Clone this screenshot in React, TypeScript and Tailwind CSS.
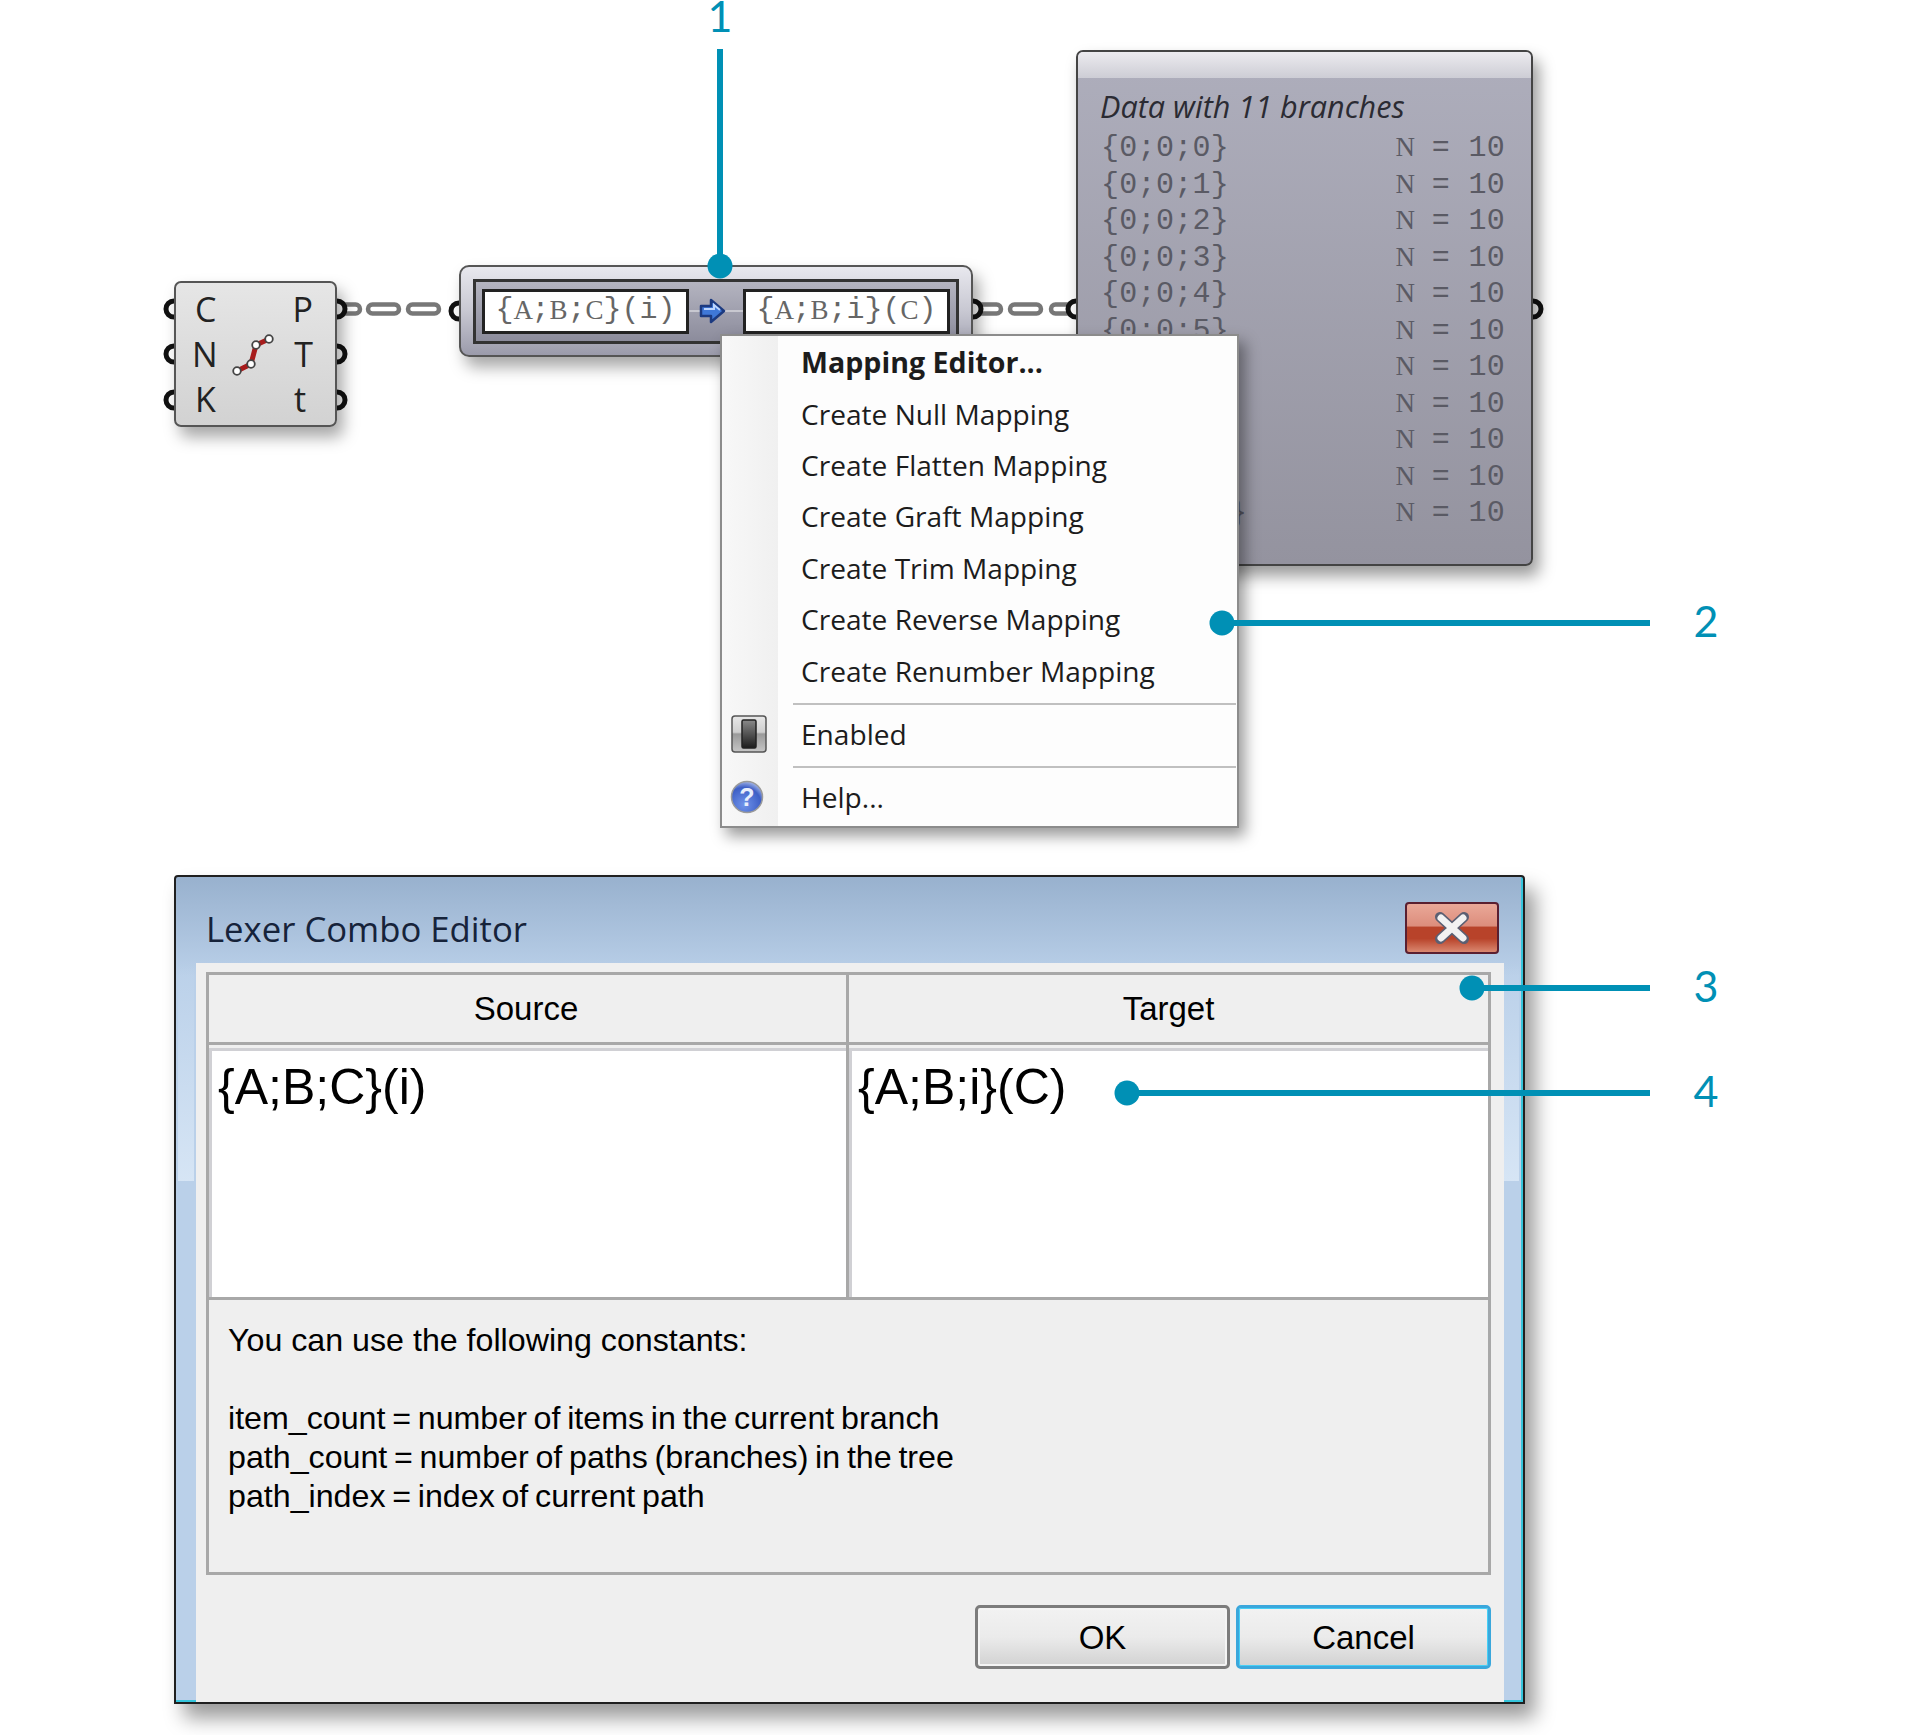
import React from 'react';

const MENU_FONT = { fontFamily: '"Open Sans", sans-serif' };
const MONO_FONT = { fontFamily: '"Liberation Mono", monospace' };
const SLAB_FONT = { fontFamily: '"Liberation Serif", serif' };

const rows = ['{0;0;0}', '{0;0;1}', '{0;0;2}', '{0;0;3}', '{0;0;4}', '{0;0;5}', '{0;0;6}', '{0;0;7}', '{0;0;8}', '{0;0;9}', '{0;0;10}'];
const mappings = ['Create Null Mapping', 'Create Flatten Mapping', 'Create Graft Mapping', 'Create Trim Mapping', 'Create Reverse Mapping', 'Create Renumber Mapping'];

// the original is Courier: capitals get a serif face inside the same cell width
const Slab = ({ text }: { text: string }) => (
  <>
    {text.split(/([A-Z])/).map((part, i) =>
      /^[A-Z]$/.test(part) ? (
        <span key={i} className="inline-block w-[18px] text-center text-[27px]" style={SLAB_FONT}>
          {part}
        </span>
      ) : (
        <span key={i}>{part}</span>
      ),
    )}
  </>
);

const Port = ({ cx, cy }: { cx: number; cy: number }) => (
  <circle cx={cx} cy={cy} r="8" fill="#fff" stroke="#111" strokeWidth="5" />
);

const Pill = ({ x1, x2, y }: { x1: number; x2: number; y: number }) => (
  <rect x={x1} y={y - 4.5} width={x2 - x1} height="9" rx="4.5" fill="#fff" stroke="#777" strokeWidth="4.5" />
);

// wires and grip ports sit under the nodes
const Wires = () => (
  <svg className="absolute left-0 top-0" width="1912" height="600">
    <Pill x1={335} x2={360} y={309} />
    <Pill x1={368} x2={399} y={309} />
    <Pill x1={408} x2={439} y={309} />
    <Pill x1={975} x2={1001} y={309} />
    <Pill x1={1010} x2={1041} y={309} />
    <Pill x1={1051} x2={1085} y={309} />
    <Port cx={174} cy={309} />
    <Port cx={174} cy={354} />
    <Port cx={174} cy={400} />
    <Port cx={337} cy={309} />
    <Port cx={337} cy={354} />
    <Port cx={337} cy={400} />
    <Port cx={459} cy={311} />
    <Port cx={973} cy={309} />
    <Port cx={1076} cy={309} />
    <Port cx={1533} cy={309} />
  </svg>
);

const CurveNode = () => (
  <div
    className="absolute left-[174px] top-[281px] h-[146px] w-[163px] rounded-[7px] border-2 border-[#555] bg-gradient-to-b from-[#e6e6e6] to-[#d2d2d2] text-[34px] leading-none text-[#222] shadow-[6px_10px_16px_rgba(0,0,0,0.35)]"
    style={MENU_FONT}
  >
    <div className="flex h-full flex-col justify-between px-[19px] py-[6px]">
      <div className="flex h-[40px] items-center justify-between"><span>C</span><span className="pr-[3px]">P</span></div>
      <div className="flex h-[40px] items-center justify-between"><span className="-ml-[3px]">N</span><span className="pr-[3px]">T</span></div>
      <div className="flex h-[40px] items-center justify-between"><span>K</span><span className="pr-[10px]">t</span></div>
    </div>
    <svg className="absolute left-[52px] top-[47px]" width="50" height="50" viewBox="0 0 50 50">
      <polyline points="9,41 23,34 28,15 41,9" fill="none" stroke="#a81c1c" strokeWidth="5" />
      <g fill="#fff" stroke="#444" strokeWidth="1.8">
        <circle cx="9" cy="41" r="3.8" />
        <circle cx="23" cy="34" r="3.8" />
        <circle cx="28" cy="15" r="3.8" />
        <circle cx="41" cy="9" r="3.8" />
      </g>
    </svg>
  </div>
);

const LexBox = ({ text }: { text: string }) => (
  <div
    className="flex h-[45px] w-[207px] items-center justify-center border-[3px] border-[#222] bg-white pb-[2px] text-[30px] leading-none text-[#666]"
    style={MONO_FONT}
  >
    <Slab text={text} />
  </div>
);

const LexerNode = () => (
  <div className="absolute left-[459px] top-[265px] flex h-[92px] w-[514px] items-center justify-center rounded-[10px] border-2 border-[#555] bg-gradient-to-b from-[#e8e8ee] via-[#c8c8d2] to-[#9b9bab] shadow-[6px_10px_16px_rgba(0,0,0,0.35)]">
    <div className="flex h-[65px] w-[486px] items-center justify-between border-[3px] border-[#333] bg-gradient-to-b from-[#b4b4c0] to-[#8c8c9c] px-[6px]">
      <LexBox text="{A;B;C}(i)" />
      <div className="relative h-[2px] flex-1 bg-[#c8c8d0]">
        <svg className="absolute left-[9px] -top-[14px]" width="30" height="30" viewBox="0 0 30 30">
          <path d="M3 10 H13 V4 L26 15 L13 26 V20 H3 Z" fill="#3f78d8" stroke="#1c3a80" strokeWidth="2.5" strokeLinejoin="round" />
          <path d="M6 13 H16 V9 L22 14" fill="none" stroke="#bcd6ff" strokeWidth="2" />
        </svg>
      </div>
      <LexBox text="{A;B;i}(C)" />
    </div>
  </div>
);

const PanelNode = () => (
  <div className="absolute left-[1076px] top-[50px] h-[516px] w-[457px] overflow-hidden rounded-[7px] border-2 border-[#444] bg-gradient-to-b from-[#aeaebc] to-[#94939f] shadow-[6px_10px_16px_rgba(0,0,0,0.4)]">
    <div className="h-[26px] bg-gradient-to-b from-[#ecebef] to-[#cdcdd5]" />
    <div className="pl-[22px] pr-[26px]">
      <div className="mt-[8px] text-[30.6px] italic leading-[40px] text-[#2b2b33]" style={MENU_FONT}>
        Data with 11 branches
      </div>
      <div className="mt-[4px] pl-[1px] text-[30px] leading-none tracking-[0.3px] text-[#5a5a64]" style={MONO_FONT}>
        {rows.map((r) => (
          <div key={r} className="flex h-[36.5px] items-center justify-between">
            <span>{r}</span>
            <span><Slab text="N = 10" /></span>
          </div>
        ))}
      </div>
    </div>
  </div>
);

const MenuRow = ({ label, bold, h, icon }: { label: string; bold?: boolean; h: string; icon?: React.ReactNode }) => (
  <div className={`flex items-center ${h}`}>
    <div className="flex h-full w-[56px] shrink-0 items-center justify-center">{icon}</div>
    <div className={`pl-[23px] leading-none text-[#1c1c1c] ${bold ? 'text-[28.6px] font-bold' : 'text-[28.1px]'}`}>{label}</div>
  </div>
);

const SwitchIcon = () => (
  <svg width="36" height="38" viewBox="0 0 36 38" className="-ml-[2px]">
    <defs>
      <linearGradient id="swOuter" x1="0" y1="0" x2="0" y2="1">
        <stop offset="0" stopColor="#e8e8e8" />
        <stop offset="0.45" stopColor="#cfcfcf" />
        <stop offset="0.5" stopColor="#9a9a9a" />
        <stop offset="1" stopColor="#c6c6c6" />
      </linearGradient>
      <linearGradient id="swInner" x1="0" y1="0" x2="0" y2="1">
        <stop offset="0" stopColor="#8a8a8a" />
        <stop offset="1" stopColor="#1c1c1c" />
      </linearGradient>
    </defs>
    <rect x="1" y="1" width="34" height="36" rx="3" fill="url(#swOuter)" stroke="#555" strokeWidth="1.5" />
    <rect x="11" y="5" width="14" height="28" rx="1.5" fill="url(#swInner)" stroke="#222" strokeWidth="1.5" />
  </svg>
);

const HelpIcon = () => (
  <svg width="34" height="34" viewBox="0 0 34 34" className="-ml-[7px]">
    <defs>
      <radialGradient id="helpBall" cx="0.4" cy="0.75" r="0.8">
        <stop offset="0" stopColor="#6f93ea" />
        <stop offset="0.7" stopColor="#3e5fc6" />
        <stop offset="1" stopColor="#b7c6ee" />
      </radialGradient>
    </defs>
    <circle cx="17" cy="17" r="15.5" fill="url(#helpBall)" stroke="#9a9a9a" strokeWidth="1.5" />
    <text x="17" y="26" textAnchor="middle" fontSize="25" fontWeight="700" fill="#e8eefc" fontFamily="Liberation Sans, sans-serif">?</text>
  </svg>
);

const ContextMenu = () => (
  <div
    className="absolute left-[720px] top-[334px] h-[494px] w-[519px] border-2 border-[#8c8c8c] bg-[#fdfdfd] shadow-[6px_8px_14px_rgba(0,0,0,0.4)]"
    style={MENU_FONT}
  >
    <div className="absolute inset-y-0 left-0 w-[56px] bg-gradient-to-r from-[#f8f8f8] to-[#f0f0f0]" />
    <div className="relative flex flex-col">
      <MenuRow label="Mapping Editor..." bold h="h-[52px]" />
      {mappings.map((m) => (
        <MenuRow key={m} label={m} h="h-[51.4px]" />
      ))}
      <div className="ml-[71px] mr-[1px] mt-[7px] h-[2px] bg-[#c0c0c0]" />
      <MenuRow label="Enabled" h="h-[58px]" icon={<SwitchIcon />} />
      <div className="ml-[71px] mr-[1px] mt-[3px] h-[2px] bg-[#c0c0c0]" />
      <MenuRow label="Help..." h="h-[58px]" icon={<HelpIcon />} />
    </div>
  </div>
);

const DialogButton = ({ label, focused }: { label: string; focused?: boolean }) => (
  <div
    className={`flex h-[64px] w-[255px] items-center justify-center rounded-[5px] border-[3px] bg-gradient-to-b from-[#f2f2f2] via-[#ebebeb] to-[#d2d2d2] text-[33px] leading-none text-black ${
      focused ? 'border-[#3aa7dc] shadow-[inset_0_0_0_1px_#46d0f6]' : 'border-[#7c7c7c] shadow-[inset_0_0_0_2px_#f4f4f4]'
    }`}
  >
    {label}
  </div>
);

const Dialog = () => (
  <div
    className="absolute left-[174px] top-[875px] flex h-[829px] w-[1351px] flex-col rounded-t-[4px] border-2 border-[#1f1f1f] bg-gradient-to-b from-[#98b1ce] via-[#bad0e9] via-[12%] to-[#bad0e9] shadow-[inset_-2px_-2px_0_#35c5dc,10px_14px_20px_rgba(0,0,0,0.4)]"
    style={{ fontFamily: '"Liberation Sans", sans-serif' }}
  >
    {/* glass reflection on the frame sides */}
    <div className="absolute left-[2px] top-[86px] h-[218px] w-[16px] bg-gradient-to-b from-transparent to-[#d6e5f5]" />
    <div className="absolute right-[4px] top-[86px] h-[218px] w-[16px] bg-gradient-to-b from-transparent to-[#d6e5f5]" />
    <div className="flex h-[86px] shrink-0 items-center justify-between pl-[30px] pr-[24px] pt-[17px]">
      <div className="pt-[1px] text-[34.7px] leading-none text-[#16233a]" style={MENU_FONT}>Lexer Combo Editor</div>
      <div className="relative -mt-[2px] h-[52px] w-[94px] rounded-[4px] border-2 border-[#5a1f30] bg-[linear-gradient(#eaa898_0%,#dc8d7c_46%,#b8432a_48%,#b8432a_72%,#da8870_100%)]">
        <svg className="absolute left-[26px] top-[7px]" width="38" height="34" viewBox="0 0 38 34">
          <path d="M7 6 L31 28 M31 6 L7 28" stroke="#5b5f72" strokeWidth="10" strokeLinecap="round" />
          <path d="M8 7 L30 27 M30 7 L8 27" stroke="#f2f2f2" strokeWidth="7" strokeLinecap="round" />
        </svg>
      </div>
    </div>
    <div className="relative ml-[20px] mr-[19px] flex flex-1 flex-col bg-[#efefef] pl-[10px] pr-[13px] pt-[9px]">
      <div className="border-[3px] border-[#a8a8a8]">
        <div className="flex h-[70px] border-b-[3px] border-[#a8a8a8] text-[33px] leading-none text-black">
          <div className="flex w-[640px] items-center justify-center border-r-[3px] border-[#a8a8a8] pr-[3px]">Source</div>
          <div className="flex flex-1 items-center justify-center">Target</div>
        </div>
        <div className="flex h-[255px] border-b-[3px] border-[#a8a8a8] text-[50px] leading-none text-black">
          <div className="w-[640px] border-r-[3px] border-[#a8a8a8] pt-[3px]">
            <div className="h-full border-l-[3px] border-t-[3px] border-[#d0d0d4] bg-white pl-[6px] pt-[11px]">{'{A;B;C}(i)'}</div>
          </div>
          <div className="flex-1 pt-[3px]">
            <div className="h-full border-l-[3px] border-t-[3px] border-[#d0d0d4] bg-white pl-[6px] pt-[11px]">{'{A;B;i}(C)'}</div>
          </div>
        </div>
        <div className="h-[272px] pl-[19px] pt-[21px] text-[32.2px] leading-[39px] text-black">
          <div>You can use the following constants:</div>
          <div className="mt-[39px] [word-spacing:-2.2px]">
            <div>item_count = number of items in the current branch</div>
            <div>path_count = number of paths (branches) in the tree</div>
            <div>path_index = index of current path</div>
          </div>
        </div>
      </div>
      <div className="mt-[30px] flex justify-end gap-[6px]">
        <DialogButton label="OK" />
        <DialogButton label="Cancel" focused />
      </div>
    </div>
  </div>
);

// numbered leader lines drawn over everything
const Callouts = () => (
  <>
    <svg className="absolute left-0 top-0" width="1912" height="1735">
      <g stroke="#0090b5" strokeWidth="6" fill="#0090b5">
        <line x1="720" y1="49" x2="720" y2="266" />
        <line x1="1222" y1="623" x2="1650" y2="623" />
        <line x1="1472" y1="988" x2="1650" y2="988" />
        <line x1="1127" y1="1093" x2="1650" y2="1093" />
      </g>
      <g fill="#0090b5">
        <circle cx="720" cy="266" r="12.5" />
        <circle cx="1222" cy="623" r="12.5" />
        <circle cx="1472" cy="988" r="12.5" />
        <circle cx="1127" cy="1093" r="12.5" />
      </g>
    </svg>
    {[
      { n: '1', cls: 'left-[700px] top-[-9px]' },
      { n: '2', cls: 'left-[1686px] top-[596px]' },
      { n: '3', cls: 'left-[1686px] top-[961px]' },
      { n: '4', cls: 'left-[1686px] top-[1066px]' },
    ].map((c) => (
      <div
        key={c.n}
        className={`absolute w-[40px] text-center text-[43px] leading-[50px] text-[#0090b5] ${c.cls}`}
        style={{ fontFamily: 'Lato, sans-serif' }}
      >
        {c.n}
      </div>
    ))}
  </>
);

export default function App() {
  return (
    <div className="relative h-[1735px] w-[1912px] overflow-hidden bg-white">
      <Wires />
      <PanelNode />
      <CurveNode />
      <LexerNode />
      <ContextMenu />
      <Dialog />
      <Callouts />
    </div>
  );
}
